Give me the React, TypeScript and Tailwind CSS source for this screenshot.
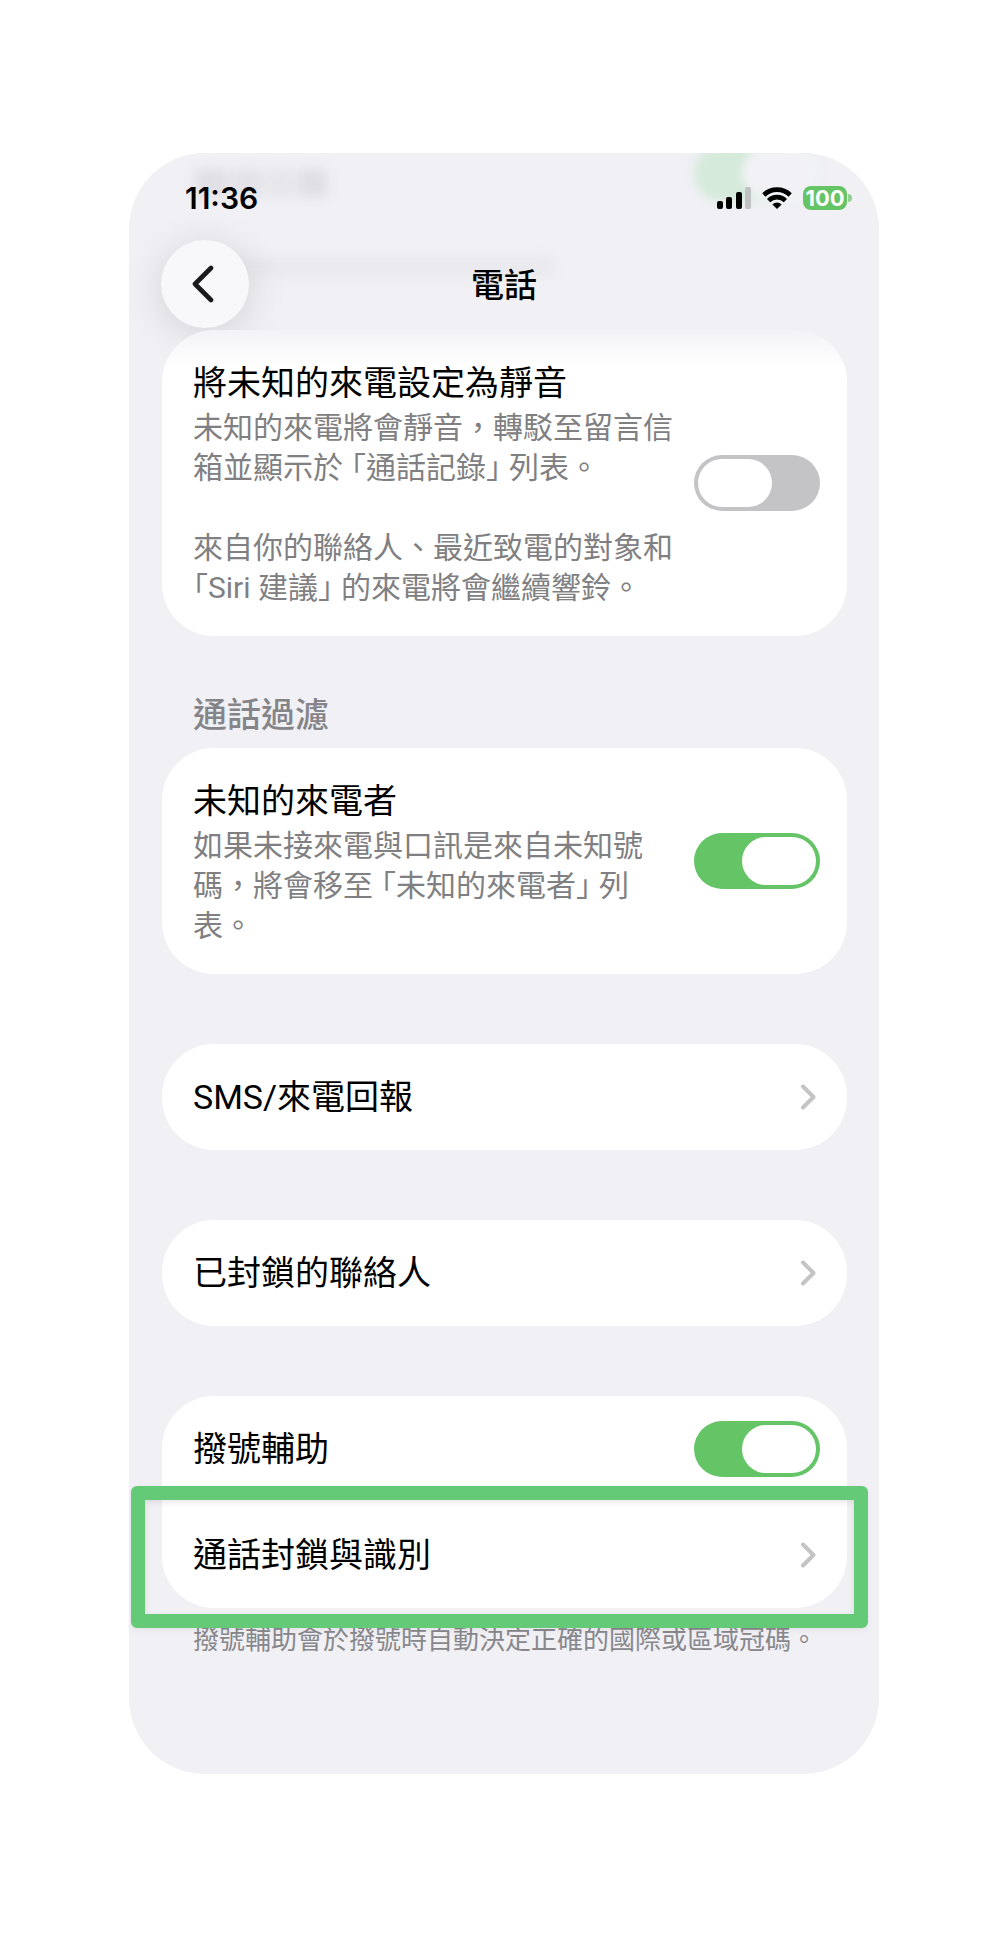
import { useState } from "react";
import type { ReactNode } from "react";

type SwitchProps = {
    id: string;
    defaultOn?: boolean;
    describedBy?: string;
}

function Switch({ id, defaultOn = false, describedBy }: SwitchProps) {
    const [on, setOn] = useState(defaultOn);
    return (
        <input
            id={id}
            type="checkbox"
            role="switch"
            checked={on}
            aria-describedby={describedBy}
            onChange={(e) => setOn(e.target.checked)}
            className="block h-14 w-[126px] shrink-0 cursor-pointer appearance-none rounded-full bg-[#c4c4c7] p-1 before:block before:h-12 before:w-[74px] before:rounded-full before:bg-white checked:bg-[#65c466] checked:before:translate-x-11"
        />
    );
}

function Chevron() {
    return (
        <svg width="16" height="26" viewBox="0 0 16 26" fill="none" className="shrink-0" aria-hidden="true">
            <path d="M3 2.5 13.5 13 3 23.5" stroke="#c4c4c6" strokeWidth="4" strokeLinecap="round" strokeLinejoin="round" />
        </svg>
    );
}

// corner brackets set half width, with a little air on the outside
function Quote({ text, lineStart = false }: { text: string; lineStart?: boolean }) {
    return (
        <span className={lineStart ? "mr-2 [font-feature-settings:'halt']" : "mx-2 [font-feature-settings:'halt']"}>
            {`「${text}」`}
        </span>
    );
}

type SettingProps = {
    id: string;
    title: string;
    defaultOn?: boolean;
    faded?: boolean;
    children: ReactNode;
}

function SettingCard({ id, title, defaultOn, faded = false, children }: SettingProps) {
    return (
        <section className={`flex items-center justify-between gap-4 rounded-[52px] py-7 pr-[27px] pl-[31px] ${faded ? "bg-linear-to-b from-[#f3f3f7] to-white to-12%" : "bg-white"}`}>
            <div className="min-w-0 flex-1">
                <label htmlFor={id} className="block text-[34px] leading-[50px]">{title}</label>
                <div id={`${id}-note`} className="text-[30px] leading-10 text-[#808082]">{children}</div>
            </div>
            <Switch id={id} defaultOn={defaultOn} describedBy={`${id}-note`} />
        </section>
    );
}

function LinkRow({ children }: { children: ReactNode }) {
    return (
        <a href="#" className="flex h-[106px] items-center justify-between pr-[31px] pl-[31px] text-[34px] leading-[50px]">
            <span>{children}</span>
            <Chevron />
        </a>
    );
}

function StatusBar() {
    return (
        <div className="flex h-8 items-center justify-between pr-[27px] pl-14">
            <span className="font-[Inter] text-[30px] leading-8 font-semibold">11:36</span>
            <div className="flex items-center gap-[11px]">
                <svg width="34" height="22" viewBox="0 0 34 22" aria-hidden="true">
                    <rect x="0" y="14" width="6" height="8" rx="2" />
                    <rect x="9" y="10" width="6" height="12" rx="2" />
                    <rect x="19" y="5" width="6" height="17" rx="2" />
                    <rect x="28" y="0" width="6" height="22" rx="2" fill="#bfc1c2" />
                </svg>
                <svg width="30" height="22" viewBox="0 0 30 22" fill="none" stroke="#000" strokeWidth="4.6" aria-hidden="true">
                    <path d="M1.8 8a19 19 0 0 1 26.4 0" />
                    <path d="M6.6 13.6a12 12 0 0 1 16.8 0" />
                    <path d="M15 22 10.4 17.4a6.6 6.6 0 0 1 9.2 0Z" fill="#000" stroke="none" />
                </svg>
                <div className="flex items-center gap-px">
                    <span className="flex h-6 w-11 items-center justify-center rounded-lg bg-[#65c466] font-[Inter] text-[22px] leading-6 font-bold text-white">100</span>
                    <span className="h-2 w-1 rounded-r-full bg-[#65c466]/70" />
                </div>
            </div>
        </div>
    );
}

// rows that have scrolled up under the frosted title bar
function ScrolledUnder() {
    return (
        <div className="pointer-events-none absolute inset-x-0 top-0 h-40" aria-hidden="true">
            <div className="absolute top-4 left-[66px] flex gap-1 blur-[6px]">
                <span className="h-7 w-8 bg-[#dfdfe4]" />
                <span className="h-7 w-8 bg-[#e2e2e7]" />
                <span className="h-7 w-7 bg-[#e6e6ea]" />
                <span className="h-7 w-7 bg-[#dedee3]" />
            </div>
            <div className="absolute top-[104px] left-[110px] h-5 w-[316px] bg-[#e9e9ee] blur-[6px]" />
            <div className="absolute -top-2 right-[59px] flex h-14 w-[126px] justify-end rounded-full bg-linear-to-r from-[#d5eadb] from-40% to-[#ecf2f0] to-60% p-1 blur-[4px]">
                <span className="h-12 w-[74px] rounded-full bg-[#f2f2f6]" />
            </div>
        </div>
    );
}

function NavBar() {
    return (
        <div className="grid grid-cols-[88px_1fr_88px] items-center px-8">
            <button
                type="button"
                aria-label="返回"
                className="flex size-[88px] items-center justify-center rounded-full bg-[#f8f8fa] pr-1 shadow-[0_6px_40px_rgba(0,0,0,0.13)]"
            >
                <svg width="22" height="38" viewBox="0 0 22 38" fill="none" aria-hidden="true">
                    <path d="M19 3 3 19l16 16" stroke="#1a1a1c" strokeWidth="4.6" strokeLinecap="round" strokeLinejoin="round" />
                </svg>
            </button>
            <h1 className="pt-1 text-center text-[33px] leading-10 font-medium">電話</h1>
        </div>
    );
}

export default function App() {
    return (
        <div lang="zh-Hant" className="bg-white pt-[153px] pb-[166px] font-[Roboto,'Noto_Sans_CJK_TC',sans-serif] text-black">
            <main className="relative mx-auto w-full max-w-[750px] overflow-hidden rounded-[76px] bg-[#f0f0f5] pb-[118px]">
                <ScrolledUnder />
                <header className="relative flex flex-col gap-[26px] pt-[29px]">
                    <StatusBar />
                    <NavBar />
                </header>

                <div className="relative mt-[2px] pr-8 pl-[33px]">
                    <SettingCard id="silence-unknown" title="將未知的來電設定為靜音" faded>
                        <p>未知的來電將會靜音，轉駁至留言信箱並顯示於<Quote text="通話記錄" />列表。</p>
                        <p className="mt-10">
                            來自你的聯絡人、最近致電的對象和<br />
                            <Quote text="Siri 建議" lineStart />的來電將會繼續響鈴。
                        </p>
                    </SettingCard>

                    <h2 className="pt-[54px] pb-2 pl-[31px] text-[34px] leading-[50px] font-medium text-[#858589]">通話過濾</h2>
                    <SettingCard id="unknown-callers" title="未知的來電者" defaultOn>
                        <p>如果未接來電與口訊是來自未知號碼，將會移至<Quote text="未知的來電者" />列表。</p>
                    </SettingCard>

                    <div className="mt-[70px] rounded-[52px] bg-white">
                        <LinkRow>SMS/來電回報</LinkRow>
                    </div>

                    <div className="mt-[70px] rounded-[52px] bg-white">
                        <LinkRow>已封鎖的聯絡人</LinkRow>
                    </div>

                    <div className="mt-[70px] rounded-[52px] bg-white">
                        <div className="flex h-[106px] items-center justify-between pr-[27px] pl-[31px]">
                            <label htmlFor="dial-assist" className="text-[34px] leading-[50px]">撥號輔助</label>
                            <Switch id="dial-assist" defaultOn />
                        </div>
                        <div className="relative">
                            <LinkRow>通話封鎖與識別</LinkRow>
                            <div className="pointer-events-none absolute -top-4 -right-[21px] -bottom-5 -left-[31px] z-10 rounded-md border-[14px] border-[#65ca78] shadow-[inset_0_2px_6px_rgba(0,0,0,0.1),0_2px_6px_rgba(0,0,0,0.06)]" />
                        </div>
                    </div>
                    <p className="pt-4 pl-[31px] text-[26px] leading-8 text-[#88888c]">撥號輔助會於撥號時自動決定正確的國際或區域冠碼。</p>
                </div>
            </main>
        </div>
    );
}
